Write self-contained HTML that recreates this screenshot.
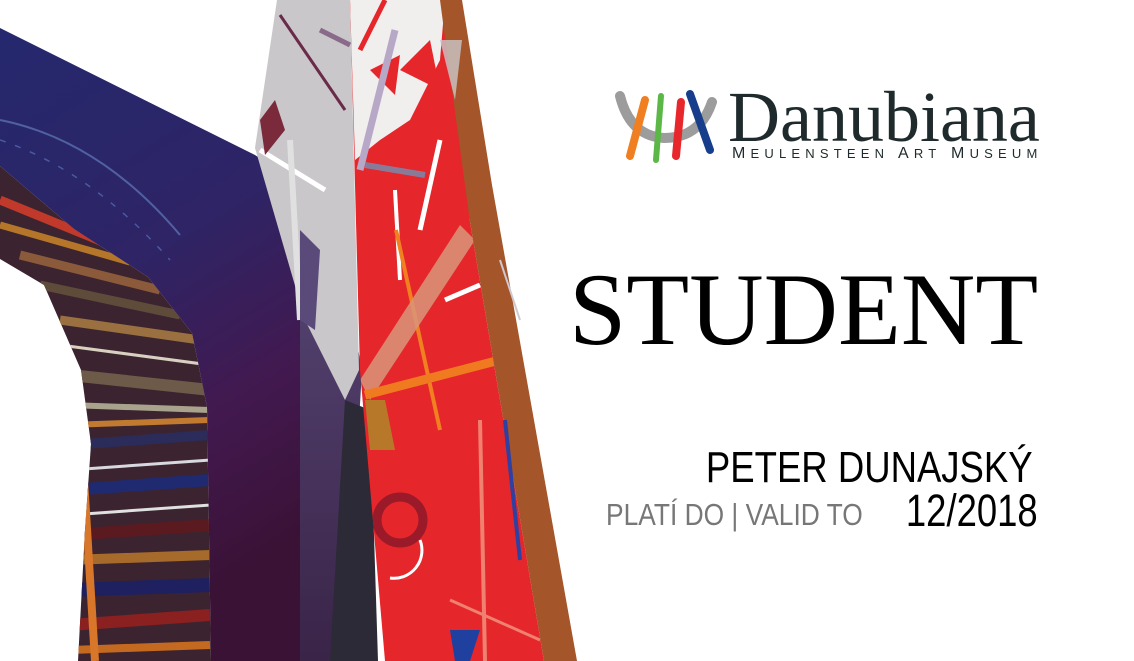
<!DOCTYPE html>
<html><head><meta charset="utf-8"><style>
html,body{margin:0;padding:0;background:#fff;}
body{width:1134px;height:661px;position:relative;overflow:hidden;font-family:"Liberation Sans",sans-serif;}
.abs{position:absolute;white-space:nowrap;}
</style></head><body>
<svg class="abs" style="left:0;top:0" width="600" height="661" viewBox="0 0 600 661">
<defs>
<linearGradient id="bl" x1="0" y1="0" x2="0.3" y2="1">
<stop offset="0" stop-color="#25286e"/><stop offset="0.45" stop-color="#2e2466"/><stop offset="0.75" stop-color="#42194f"/><stop offset="1" stop-color="#3a1236"/></linearGradient>
<linearGradient id="pu" x1="0" y1="0" x2="0" y2="1"><stop offset="0" stop-color="#5a4a7a"/><stop offset="1" stop-color="#3a2448"/></linearGradient>
<clipPath id="arch"><polygon points="0,259 44,285 81,370 91,444 85,530 78,661 211,661 207,407 192,333 148,277 74,229 0,166"/></clipPath>
<clipPath id="red"><polygon points="350,0 450,0 470,222 544,661 385,661 360,370"/></clipPath>
</defs>
<polygon points="0,28 255,155 300,185 310,661 211,661 207,407 192,333 148,277 74,229 0,166" fill="url(#bl)"/>
<g clip-path="url(#arch)">
<rect x="0" y="150" width="220" height="520" fill="#3b2430"/>
<g stroke-width="9">
<line x1="0" y1="200" x2="110" y2="245" stroke="#c0392b"/>
<line x1="0" y1="225" x2="130" y2="262" stroke="#b5762a" stroke-width="7"/>
<line x1="20" y1="255" x2="160" y2="290" stroke="#8a5a3a"/>
<line x1="40" y1="285" x2="180" y2="315" stroke="#5e4b3a"/>
<line x1="60" y1="320" x2="200" y2="340" stroke="#9a7040"/>
<line x1="60" y1="345" x2="210" y2="365" stroke="#d8d0c0" stroke-width="3"/>
<line x1="70" y1="375" x2="210" y2="390" stroke="#6d5a48" stroke-width="12"/>
<line x1="70" y1="405" x2="210" y2="410" stroke="#a9a38d" stroke-width="6"/>
<line x1="70" y1="425" x2="210" y2="420" stroke="#c27a30" stroke-width="6"/>
<line x1="70" y1="445" x2="210" y2="435" stroke="#2b2c5a" stroke-width="10"/>
<line x1="70" y1="470" x2="210" y2="460" stroke="#d8d8e0" stroke-width="3"/>
<line x1="70" y1="490" x2="210" y2="480" stroke="#202a70" stroke-width="12"/>
<line x1="70" y1="515" x2="210" y2="505" stroke="#e0e0e0" stroke-width="3"/>
<line x1="70" y1="535" x2="210" y2="525" stroke="#5a1a20" stroke-width="12"/>
<line x1="70" y1="560" x2="210" y2="555" stroke="#a66a2a" stroke-width="10"/>
<line x1="70" y1="590" x2="210" y2="585" stroke="#1e2060" stroke-width="14"/>
<line x1="70" y1="625" x2="210" y2="615" stroke="#8a2020" stroke-width="12"/>
<line x1="70" y1="650" x2="210" y2="645" stroke="#c46a20" stroke-width="8"/>
</g>
<line x1="78" y1="380" x2="95" y2="661" stroke="#d8762a" stroke-width="8"/>
</g>
<polygon points="296,178 330,200 362,370 345,661 300,661 300,300" fill="url(#pu)"/>
<polygon points="345,400 370,410 378,661 330,661" fill="#2c2a36"/>
<polygon points="277,0 350,0 359,370 345,400 305,320 255,148" fill="#c9c7c9"/>
<g stroke-width="3" fill="none">
<line x1="280" y1="15" x2="345" y2="110" stroke="#6a2a4a"/>
<line x1="260" y1="150" x2="325" y2="190" stroke="#fff" stroke-width="5"/>
<line x1="290" y1="140" x2="300" y2="320" stroke="#e0e0e0" stroke-width="6"/>
<line x1="320" y1="30" x2="350" y2="45" stroke="#8a6a8a" stroke-width="5"/>
</g>
<polygon points="260,120 275,100 285,130 265,155" fill="#7a2a3a"/>
<polygon points="300,230 320,250 315,330 300,320" fill="#5a4a7a"/>
<g clip-path="url(#red)">
<rect x="340" y="0" width="220" height="661" fill="#e5262a"/>
<polygon points="350,0 445,0 440,60 410,120 380,140 355,160" fill="#f1eeee"/>
<polygon points="370,70 400,55 395,95" fill="#e5262a"/>
<polygon points="400,70 430,40 440,90" fill="#e5262a"/>
<line x1="360" y1="50" x2="385" y2="0" stroke="#e5262a" stroke-width="5"/>
<line x1="395" y1="30" x2="360" y2="170" stroke="#b8a8c8" stroke-width="7"/>
<line x1="365" y1="165" x2="425" y2="175" stroke="#8a7a9a" stroke-width="6"/>
<line x1="440" y1="140" x2="420" y2="230" stroke="#fff" stroke-width="5"/>
<line x1="395" y1="190" x2="400" y2="280" stroke="#fff" stroke-width="4"/>
<line x1="396" y1="230" x2="440" y2="430" stroke="#f08020" stroke-width="4"/>
<polygon points="360,380 460,225 475,240 370,400" fill="#d9957a" opacity="0.85"/>
<line x1="365" y1="395" x2="500" y2="360" stroke="#f07a20" stroke-width="9"/>
<line x1="445" y1="300" x2="480" y2="285" stroke="#fff" stroke-width="5"/>
<polygon points="365,400 385,400 395,450 370,450" fill="#b8782a"/>
<circle cx="400" cy="520" r="23" fill="none" stroke="#9a1a2a" stroke-width="9"/>
<path d="M420 540 A28 28 0 0 1 390 578" stroke="#fff" stroke-width="3" fill="none"/>
<line x1="480" y1="420" x2="485" y2="661" stroke="#f08070" stroke-width="4"/>
<line x1="450" y1="600" x2="540" y2="640" stroke="#f08070" stroke-width="3"/>
<polygon points="450,630 480,630 470,661 455,661" fill="#2040a0"/>
</g>
<polygon points="440,0 462,0 492,185 577,661 544,661 470,222 448,60" fill="#a4552a"/>
<polygon points="440,40 462,40 455,100" fill="#c9c7c9" opacity="0.8"/>
<line x1="500" y1="260" x2="520" y2="320" stroke="#d0c8d0" stroke-width="2"/>
<line x1="505" y1="420" x2="520" y2="560" stroke="#3040a0" stroke-width="4"/>
<path d="M0 120 Q100 140 180 235" stroke="#5060a0" stroke-width="2" fill="none"/>
<path d="M0 140 Q90 170 170 260" stroke="#4a5aa0" stroke-width="1.5" fill="none" stroke-dasharray="6 10"/>
</svg>

<svg class="abs" style="left:612px;top:88px" width="110" height="78" viewBox="0 0 110 78">
<path d="M8 8 Q18 48 52 50 Q88 50 100 14" stroke="#9c9c9c" stroke-width="10" fill="none" stroke-linecap="round"/>
<path d="M33 12 L18 68" stroke="#f07f22" stroke-width="8" stroke-linecap="round"/>
<path d="M49 8 L44 72" stroke="#5bb846" stroke-width="6" stroke-linecap="round"/>
<path d="M69 14 L64 68" stroke="#e8272c" stroke-width="8" stroke-linecap="round"/>
<path d="M78 6 L98 62" stroke="#173e8a" stroke-width="8" stroke-linecap="round"/>
</svg>
<div class="abs" style="left:728px;top:77px;font-family:'Liberation Serif',serif;font-size:72px;line-height:80px;color:#1f2a2c;">Danubiana</div>
<div class="abs" style="left:732px;top:144px;font-size:16px;line-height:19px;color:#1f2a2c;letter-spacing:5.2px;">M<span style="font-size:13px">EULENSTEEN</span> A<span style="font-size:13px">RT</span> M<span style="font-size:13px">USEUM</span></div>

<div class="abs" style="left:569px;top:255px;font-family:'Liberation Serif',serif;font-size:103px;line-height:110px;color:#000;">STUDENT</div>
<div class="abs" style="right:101px;top:440px;font-size:44px;line-height:56px;color:#000;transform:scaleX(0.83);transform-origin:right center;">PETER DUNAJSKÝ</div>
<div class="abs" style="right:96px;top:483px;font-size:45px;line-height:56px;color:#000;transform:scaleX(0.81);transform-origin:right center;">12/2018</div>
<div class="abs" style="left:606px;top:496px;font-size:31px;line-height:38px;color:#777;transform:scaleX(0.85);transform-origin:left center;">PLATÍ DO | VALID TO</div>
</body></html>
